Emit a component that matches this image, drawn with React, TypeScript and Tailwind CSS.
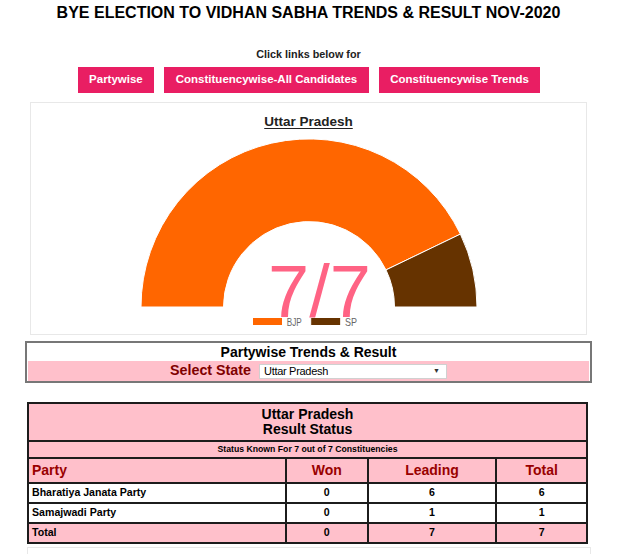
import React from "react";

const rows = [
  { party: "Bharatiya Janata Party", won: 0, leading: 6, total: 6 },
  { party: "Samajwadi Party", won: 0, leading: 1, total: 1 },
];

const buttons = ["Partywise", "Constituencywise-All Candidates", "Constituencywise Trends"];

// half doughnut, centre (278,177), r 168 / 85.5
const Gauge = () => (
  <svg width="555" height="204" viewBox="0 0 555 204" className="block">
    <path
      d="M110 177 A168 168 0 0 1 429.4 104.1 L355 139.9 A85.5 85.5 0 0 0 192.5 177 Z"
      fill="#ff6600"
      stroke="#fff"
      strokeWidth="1"
    />
    <path
      d="M429.4 104.1 A168 168 0 0 1 446 177 L363.5 177 A85.5 85.5 0 0 0 355 139.9 Z"
      fill="#663300"
      stroke="#fff"
      strokeWidth="1"
    />
    <rect x="221.5" y="187.5" width="30" height="8" fill="#ff6600" stroke="#fff" />
    <text x="255.7" y="195.5" fontSize="11" fill="#666" fontFamily="Liberation Sans, Arial, sans-serif" textLength="15" lengthAdjust="spacingAndGlyphs">
      BJP
    </text>
    <rect x="279.7" y="187.5" width="30" height="8" fill="#663300" stroke="#fff" />
    <text x="314" y="195.5" fontSize="11" fill="#666" fontFamily="Liberation Sans, Arial, sans-serif" textLength="12" lengthAdjust="spacingAndGlyphs">
      SP
    </text>
    <text x="288.5" y="187" fontSize="74" fill="#ff6384" textAnchor="middle" fontFamily="Liberation Sans, Arial, sans-serif">
      7/7
    </text>
  </svg>
);

export default function App() {
  return (
    <div className="w-[617px] bg-white pb-2 font-['Liberation_Sans',Arial,sans-serif] text-black">
      <h1 className="mt-[3px] text-center text-[16px] font-bold leading-[20px]">
        BYE ELECTION TO VIDHAN SABHA TRENDS &amp; RESULT NOV-2020
      </h1>
      <p className="mt-[23px] text-center text-[10.8px] font-bold leading-[16px] text-[#222]">
        Click links below for
      </p>
      <div className="mt-[5px] flex justify-center gap-[10px] pl-[1px]">
        {buttons.map((b) => (
          <a
            key={b}
            className="flex h-[26px] items-center bg-[#e91e63] px-[11.5px] text-[11.5px] font-bold text-white"
          >
            {b}
          </a>
        ))}
      </div>

      <div className="mx-auto mt-[9px] h-[233px] w-[557px] border border-[#e8e8e8]">
        <div className="pt-[10.5px] text-center text-[13.5px] font-bold leading-[16px] text-[#222]">
          <span className="underline underline-offset-2">Uttar Pradesh</span>
        </div>
        <Gauge />
      </div>

      <div className="mx-auto mt-[6px] w-[567px] border-2 border-[#777] px-px">
        <div className="flex h-[18px] items-center justify-center text-[14px] font-bold">
          Partywise Trends &amp; Result
        </div>
        <div className="flex h-[20px] items-center justify-center gap-[8px] bg-[#ffc0cb]">
          <span className="text-[14.3px] font-bold text-[#800000]">Select State</span>
          <div className="flex h-[15px] w-[188px] items-center justify-between border border-[#d0d0d0] bg-white pl-[4px] pr-[6px]">
            <span className="text-[11px] tracking-[-0.3px] text-black">Uttar Pradesh</span>
            <span className="text-[7px] text-[#333]">▼</span>
          </div>
        </div>
      </div>

      <table className="ml-[27px] mt-[19px] w-[561px] border-collapse border-2 border-[#1c1c1c] bg-[#ffc0cb]">
        <colgroup>
          <col className="w-[259px]" />
          <col className="w-[82px]" />
          <col className="w-[129px]" />
          <col className="w-[91px]" />
        </colgroup>
        <tbody>
          <tr className="h-[38px]">
            <td colSpan={4} className="border-2 border-[#1c1c1c] text-center text-[14px] font-bold leading-[15px]">
              Uttar Pradesh
              <br />
              Result Status
            </td>
          </tr>
          <tr className="h-[17px]">
            <td colSpan={4} className="border-2 border-[#1c1c1c] text-center text-[8.7px] font-bold leading-[11px]">
              Status Known For 7 out of 7 Constituencies
            </td>
          </tr>
          <tr className="h-[25px] text-[14px] font-bold text-[#990000]">
            <td className="border-2 border-[#1c1c1c] pl-[3px] text-left">Party</td>
            <td className="border-2 border-[#1c1c1c] text-center">Won</td>
            <td className="border-2 border-[#1c1c1c] text-center">Leading</td>
            <td className="border-2 border-[#1c1c1c] text-center">Total</td>
          </tr>
          {rows.map((r) => (
            <tr key={r.party} className="h-[20px] bg-white text-[10.6px] font-bold">
              <td className="border-2 border-[#1c1c1c] pl-[3px]">{r.party}</td>
              <td className="border-2 border-[#1c1c1c] text-center">{r.won}</td>
              <td className="border-2 border-[#1c1c1c] text-center">{r.leading}</td>
              <td className="border-2 border-[#1c1c1c] text-center">{r.total}</td>
            </tr>
          ))}
          <tr className="h-[20px] text-[10.6px] font-bold">
            <td className="border-2 border-[#1c1c1c] pl-[3px]">Total</td>
            <td className="border-2 border-[#1c1c1c] text-center">0</td>
            <td className="border-2 border-[#1c1c1c] text-center">7</td>
            <td className="border-2 border-[#1c1c1c] text-center">7</td>
          </tr>
        </tbody>
      </table>

      <div className="ml-[27px] mt-[3px] h-[40px] w-[564px] border border-[#e8e8e8]" />
    </div>
  );
}
